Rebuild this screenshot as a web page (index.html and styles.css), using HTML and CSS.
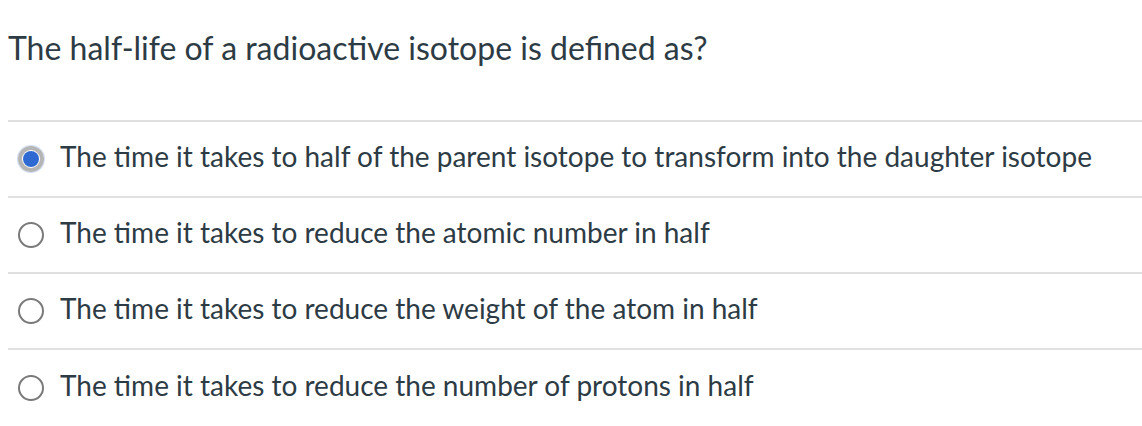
FILE: index.html
```html
<!DOCTYPE html>
<html>
<head>
<meta charset="utf-8">
<link rel="stylesheet" href="styles.css">
</head>
<body>
<div class="quiz">
  <div class="question">The half-life of a radioactive isotope is defined as?</div>
  <div class="answers">
    <div class="answer">
      <span class="radio checked"><span class="dot"></span></span>
      <span class="label">The time it takes to half of the parent isotope to transform into the daughter isotope</span>
    </div>
    <div class="answer">
      <span class="radio"></span>
      <span class="label">The time it takes to reduce the atomic number in half</span>
    </div>
    <div class="answer">
      <span class="radio"></span>
      <span class="label">The time it takes to reduce the weight of the atom in half</span>
    </div>
    <div class="answer">
      <span class="radio"></span>
      <span class="label">The time it takes to reduce the number of protons in half</span>
    </div>
  </div>
</div>
</body>
</html>
```

FILE: styles.css
```css
html, body {
  margin: 0;
  padding: 0;
  background: #fff;
}
body {
  font-family: Lato, "Open Sans", sans-serif;
  color: #2d3b45;
}
.quiz {
  padding: 0 0 0 8px;
}
.question {
  font-size: 32px;
  line-height: 40px;
  padding-top: 28px;
  height: 120px;
  box-sizing: border-box;
}
.answers {
  border-top: 2px solid #e0e0e0;
}
.answer {
  display: flex;
  align-items: center;
  height: 76px;
  box-sizing: border-box;
  border-bottom: 2px solid #e0e0e0;
}
.answer:last-child {
  border-bottom: none;
}
.radio {
  width: 26px;
  height: 26px;
  box-sizing: border-box;
  border: 2px solid #7a7a7a;
  border-radius: 50%;
  margin-left: 10px;
  margin-right: 16px;
  flex: none;
  display: flex;
  align-items: center;
  justify-content: center;
}
.radio.checked {
  border: 4px solid #b5b5b5;
  box-shadow: 0 0 0 1px #d0def5;
}
.dot {
  width: 16px;
  height: 16px;
  border-radius: 50%;
  background: #2f6ad3;
}
.label {
  font-size: 28px;
  line-height: 34px;
  padding-bottom: 6px;
}
```
